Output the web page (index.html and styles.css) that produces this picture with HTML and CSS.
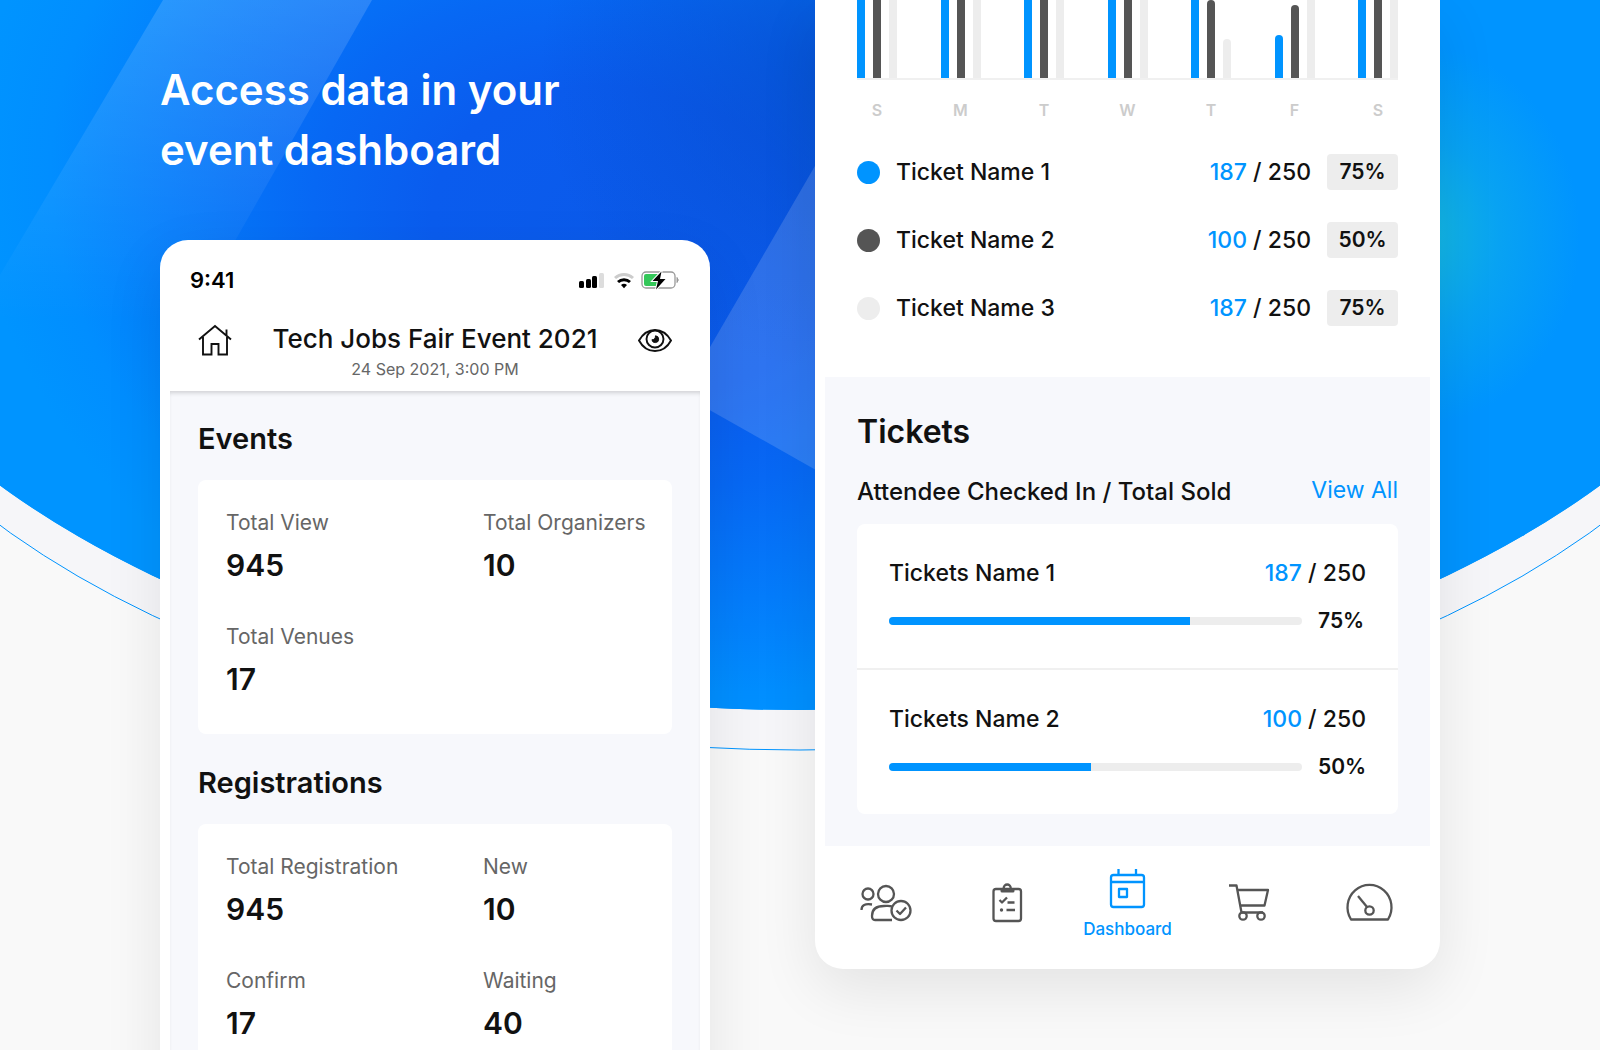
FILE: index.html
```html
<!DOCTYPE html>
<html lang="en">
<head>
<meta charset="utf-8">
<meta name="viewport" content="width=device-width, initial-scale=1">
<title>Access data in your event dashboard</title>
<link rel="stylesheet" href="styles.css">
</head>
<body>
<main class="stage">
  <svg class="backdrop" viewBox="0 0 1600 1050" preserveAspectRatio="xMidYMin slice" aria-hidden="true">
    <defs>
      <radialGradient id="deep" gradientUnits="userSpaceOnUse" cx="0" cy="0" r="1" gradientTransform="translate(630 240) rotate(16) scale(670 500)">
        <stop offset="0" stop-color="#0b5aea"/>
        <stop offset=".3" stop-color="#0a5cee"/>
        <stop offset=".48" stop-color="#0768f4"/>
        <stop offset=".7" stop-color="#047cfb"/>
        <stop offset=".88" stop-color="#018eff"/>
        <stop offset="1" stop-color="#0094ff"/>
      </radialGradient>
      <radialGradient id="night" gradientUnits="userSpaceOnUse" cx="840" cy="70" r="300">
        <stop offset="0" stop-color="#0647c4" stop-opacity=".65"/>
        <stop offset="1" stop-color="#0647c4" stop-opacity="0"/>
      </radialGradient>
      <radialGradient id="teal" gradientUnits="userSpaceOnUse" cx="0" cy="0" r="1" gradientTransform="translate(1420 235) scale(160 190)">
        <stop offset="0" stop-color="#14b8e0"/>
        <stop offset=".5" stop-color="#14b8e0" stop-opacity=".4"/>
        <stop offset="1" stop-color="#14b8e0" stop-opacity="0"/>
      </radialGradient>
      <linearGradient id="ray" gradientUnits="userSpaceOnUse" x1="200" y1="0" x2="200" y2="320">
        <stop offset="0" stop-color="#fff" stop-opacity=".15"/>
        <stop offset="1" stop-color="#fff" stop-opacity="0"/>
      </linearGradient>
    </defs>
    <ellipse cx="800" cy="157" rx="1021" ry="593" fill="#f6f6f9" stroke="#0094ff"/>
    <ellipse cx="800" cy="117" rx="1021" ry="593" fill="#0094ff"/>
    <ellipse cx="800" cy="117" rx="1021" ry="593" fill="url(#deep)"/>
    <ellipse cx="800" cy="117" rx="1021" ry="593" fill="url(#night)"/>
    <ellipse cx="800" cy="117" rx="1021" ry="593" fill="url(#teal)"/>
    <path d="M163 0H372L190 320H0V275Z" fill="url(#ray)"/>
    <path d="M706 354L830 140V478L706 408Z" fill="#fff" fill-opacity=".15"/>
  </svg>

  <section class="intro">
    <h1 class="headline">Access data in your<br>event dashboard</h1>

    <div class="phone phone-left">
      <div class="status">
        <span>9:41</span>
        <svg class="status-icons" viewBox="0 0 102 20" aria-label="Signal, Wi-Fi, battery charging">
          <rect x="1" y="11" width="5" height="7" rx="1.5"/>
          <rect x="8" y="9" width="5" height="9" rx="1.5"/>
          <rect x="14" y="6" width="5" height="12" rx="1.5"/>
          <rect x="21" y="3" width="5" height="15" rx="1.5" fill="#ddd"/>
          <g fill="none" stroke-width="3">
            <path d="M37 8a13.500 13.500 0 0 1 18 0" stroke="#ccc"/>
            <path d="M40 12a9 9 0 0 1 12 0" stroke="#000"/>
          </g>
          <path d="M43 15a4.500 4.500 0 0 1 6 0l-3 3.200Z"/>
          <rect x="64" y="2" width="33" height="16" rx="4" fill="none" stroke="#999" stroke-width="1.300"/>
          <rect x="66" y="4" width="15" height="12" rx="2" fill="#34c759"/>
          <path d="M99 7.500q2.500 2.500 0 5Z" fill="#999" stroke="#999"/>
          <path d="M83.500 1.500L74.500 11h5.500l-2 8.500 9.500-10.500H82Z" stroke="#fff" stroke-width="2" paint-order="stroke"/>
        </svg>
      </div>
      <header class="event-bar">
        <button class="icon-button" type="button" aria-label="Home">
          <svg viewBox="0 0 34 34"><path d="M1 16.500L17 3l16 13.500M5 14v17.500h8.500V21h7v10.500H29V14M28.500 12.500V6.500"/></svg>
        </button>
        <div class="event-title">
          <p class="event-name">Tech Jobs Fair Event 2021</p>
          <p class="event-date">24 Sep 2021, 3:00 PM</p>
        </div>
        <button class="icon-button" type="button" aria-label="Preview">
          <svg viewBox="0 0 34 34"><path d="M1 17.500C4.500 11.500 10 7 17 7s12.500 4.500 16 10.500C29.500 24 24 28 17 28S4.500 24 1 17.500Z"/><circle cx="17" cy="16" r="8.500"/><path d="M17.500 12.800a3.400 3.400 0 1 1-3.600 4c1.800.2 3.800-1.400 3.600-4Z" fill="#111" stroke-width="1"/></svg>
        </button>
      </header>
      <div class="panel stats-panel">
        <h2 class="section-title">Events</h2>
        <dl class="card stats">
          <div><dt>Total View</dt><dd>945</dd></div>
          <div><dt>Total Organizers</dt><dd>10</dd></div>
          <div><dt>Total Venues</dt><dd>17</dd></div>
        </dl>
        <h2 class="section-title">Registrations</h2>
        <dl class="card stats">
          <div><dt>Total Registration</dt><dd>945</dd></div>
          <div><dt>New</dt><dd>10</dd></div>
          <div><dt>Confirm</dt><dd>17</dd></div>
          <div><dt>Waiting</dt><dd>40</dd></div>
        </dl>
      </div>
    </div>
  </section>

  <section class="phone phone-right">
    <div class="sales">
      <div class="chart">
        <div class="day"><i class="bar blue"></i><i class="bar dark"></i><i class="bar pale"></i></div>
        <div class="day"><i class="bar blue"></i><i class="bar dark"></i><i class="bar pale"></i></div>
        <div class="day"><i class="bar blue"></i><i class="bar dark"></i><i class="bar pale"></i></div>
        <div class="day"><i class="bar blue"></i><i class="bar dark"></i><i class="bar pale"></i></div>
        <div class="day"><i class="bar blue"></i><i class="bar dark capped"></i><i class="bar pale capped" style="height:50%"></i></div>
        <div class="day"><i class="bar blue capped" style="height:55%"></i><i class="bar dark capped" style="height:94%"></i><i class="bar pale"></i></div>
        <div class="day"><i class="bar blue"></i><i class="bar dark"></i><i class="bar pale"></i></div>
      </div>
      <div class="days"><span>S</span><span>M</span><span>T</span><span>W</span><span>T</span><span>F</span><span>S</span></div>
      <ul class="legend">
        <li><i class="dot blue"></i><span class="name">Ticket Name 1</span><span><b class="sold">187</b> / 250</span><span class="pill">75%</span></li>
        <li><i class="dot dark"></i><span class="name">Ticket Name 2</span><span><b class="sold">100</b> / 250</span><span class="pill">50%</span></li>
        <li><i class="dot pale"></i><span class="name">Ticket Name 3</span><span><b class="sold">187</b> / 250</span><span class="pill">75%</span></li>
      </ul>
    </div>

    <div class="panel tickets">
      <h2 class="tickets-title">Tickets</h2>
      <div class="tickets-head">
        <p>Attendee Checked In / Total Sold</p>
        <a href="#all">View All</a>
      </div>
      <ul class="card ticket-list">
        <li>
          <div class="line"><span>Tickets Name 1</span><span><b class="sold">187</b> / 250</span></div>
          <div class="line"><div class="track"><div class="fill" style="width:73%"></div></div><span class="percent">75%</span></div>
        </li>
        <li>
          <div class="line"><span>Tickets Name 2</span><span><b class="sold">100</b> / 250</span></div>
          <div class="line"><div class="track"><div class="fill" style="width:49%"></div></div><span class="percent">50%</span></div>
        </li>
      </ul>
    </div>

    <nav class="tabs">
      <a href="#attendees" aria-label="Attendees">
        <svg viewBox="0 0 52 40"><circle cx="8" cy="9" r="5.500"/><circle cx="26" cy="9" r="8"/><path d="M1.500 25C1.500 20 5 18.500 12 19.500M32 21.500c-2-1-5-.5-8-.5-7 0-12 2-12 10 0 3 1 4 3 4h17"/><circle cx="41" cy="25.500" r="9.500"/><path d="M36.500 25.500l3.500 3.500 6-6.500"/></svg>
      </a>
      <a href="#tasks" aria-label="Tasks">
        <svg viewBox="0 0 52 40"><rect x="12.500" y="4" width="27.500" height="32" rx="2.500"/><path d="M22.700 4v-1a3.500 3.500 0 0 1 7 0v1" /><path d="M19.500 3.500h14V6q0 1.500-1.500 1.500h-11Q19.500 7.500 19.500 6Z" fill="currentColor" stroke="none"/><path d="M18.500 15l2.500 2.500 5-5M26.500 17.500h7M25.500 25h8.500"/><circle cx="20.500" cy="25" r="1.700" fill="currentColor" stroke="none"/></svg>
      </a>
      <a class="current" href="#dashboard">
        <svg viewBox="0 0 52 40"><rect x="9" y="6" width="33" height="32" rx="2.500"/><path d="M9 13h33M16.500 0v6M34 0v6"/><rect x="17" y="20" width="8" height="8"/></svg>
        <span>Dashboard</span>
      </a>
      <a href="#cart" aria-label="Cart">
        <svg viewBox="0 0 52 40"><path d="M6 0.500h7.500l5 27M14 5h31L41.500 20.500H17.500M18.500 27.500H40"/><circle cx="20" cy="31" r="3.700"/><circle cx="38" cy="31" r="3.700"/></svg>
      </a>
      <a href="#stats" aria-label="Statistics">
        <svg viewBox="0 0 52 40"><path d="M7 34.500A22 22.500 0 1 1 44 34.500Z"/><circle cx="25.500" cy="25.500" r="4.200"/><path d="M23 22L14 11"/></svg>
      </a>
    </nav>
  </section>
</main>
</body>
</html>
```
FILE: styles.css
```css
* { box-sizing: border-box; margin: 0; padding: 0; }

body {
  background: #f9f9f9;
  color: #111;
  font-family: Inter, "Liberation Sans", sans-serif;
}

.stage {
  position: relative;
  height: 100vh;
  overflow: hidden;
  padding: 0 10%;
  display: grid;
  grid-template-columns: 550fr 625fr;
  column-gap: 105px;
  align-items: start;
}

.backdrop {
  position: absolute;
  inset: 0;
  width: 100%;
  height: 100%;
}

.intro { position: relative; }

.headline {
  padding: 60px 0;
  color: #fff;
  font-size: 42px;
  font-weight: 600;
  line-height: 60px;
}

.phone {
  position: relative;
  padding: 0 10px;
  background: #fff;
  box-shadow: 0 20px 60px rgba(0, 0, 0, 0.09);
}
.phone-left { border-radius: 28px 28px 0 0; }
.phone-right { border-radius: 0 0 28px 28px; }

.status {
  display: flex;
  justify-content: space-between;
  align-items: center;
  height: 80px;
  padding: 0 20px;
  color: #000;
  font-size: 22px;
  font-weight: 600;
}
.status-icons { width: 102px; height: 20px; }

.event-bar {
  display: flex;
  justify-content: space-between;
  align-items: flex-start;
  padding: 3px 28px 8px;
}
.event-title { text-align: center; }
.event-name { font-size: 26px; font-weight: 500; line-height: 32px; }
.event-date { color: #666; font-size: 16px; line-height: 28px; }

.icon-button { border: 0; background: none; width: 34px; height: 34px; }
.icon-button svg {
  display: block;
  width: 34px;
  height: 34px;
  fill: none;
  stroke: #111;
  stroke-width: 1.9;
}

.panel { background: #f7f8fc; }

.stats-panel {
  padding: 30px 28px;
  box-shadow: inset 0 4px 4px -2px rgba(0, 0, 0, 0.16);
}
.section-title {
  margin-bottom: 23px;
  font-size: 29px;
  font-weight: 600;
  line-height: 36px;
}

.card { background: #fff; border-radius: 8px; }

.stats {
  display: grid;
  grid-template-columns: 257fr 161fr;
  row-gap: 38px;
  margin-bottom: 31px;
  padding: 28px 28px 36px;
}
.stats > div { min-width: 0; }
.stats dt {
  margin-bottom: 8px;
  color: #666;
  font-size: 21px;
  line-height: 30px;
  white-space: nowrap;
}
.stats dd { font-size: 30px; font-weight: 600; line-height: 38px; }

.blue { background: #0094ff; }
.dark { background: #555; }
.pale { background: #ededed; }

.sales { padding: 0 32px 51px; }
.chart {
  display: flex;
  justify-content: space-between;
  align-items: flex-end;
  height: 80px;
  border-bottom: 2px solid #f0f0f0;
}
.day { display: flex; align-items: flex-end; gap: 8px; height: 100%; }
.bar { width: 8px; height: 100%; }
.capped { border-radius: 4px 4px 0 0; }

.days {
  display: flex;
  justify-content: space-between;
  margin: 18px 0 32px;
  color: #ccc;
  font-size: 16px;
  font-weight: 600;
  line-height: 24px;
}
.days span { width: 40px; text-align: center; }

.legend { display: grid; gap: 32px; list-style: none; }
.legend li {
  display: flex;
  align-items: center;
  gap: 16px;
  height: 36px;
  font-size: 23px;
  font-weight: 500;
}
.name { flex: 1; }
.dot { width: 23px; height: 23px; border-radius: 50%; }
.sold { color: #0094ff; font-weight: 500; }
.pill {
  width: 71px;
  background: #ededed;
  border-radius: 4px;
  font-size: 21px;
  font-weight: 600;
  line-height: 36px;
  text-align: center;
}

.tickets { padding: 35px 32px 32px; }
.tickets-title {
  margin-bottom: 24px;
  font-size: 32px;
  font-weight: 600;
  line-height: 40px;
}
.tickets-head {
  display: flex;
  justify-content: space-between;
  align-items: flex-start;
  margin-bottom: 16px;
  font-size: 24px;
  font-weight: 500;
  line-height: 32px;
}
.tickets-head a {
  color: #0094ff;
  font-size: 23px;
  font-weight: 400;
  line-height: 28px;
  text-decoration: none;
}

.ticket-list { list-style: none; }
.ticket-list li {
  display: grid;
  gap: 16px;
  padding: 33px 32px 31px;
  font-size: 23px;
  font-weight: 500;
  line-height: 32px;
}
.ticket-list li + li { border-top: 2px solid #f0f0f0; }
.line {
  display: flex;
  justify-content: space-between;
  align-items: center;
  gap: 16px;
}
.track {
  flex: 1;
  height: 8px;
  overflow: hidden;
  background: #ededed;
  border-radius: 4px;
}
.fill { height: 100%; background: #0094ff; }
.percent { width: 48px; font-size: 21px; font-weight: 600; }

.tabs {
  display: grid;
  grid-template-columns: repeat(5, 1fr);
  align-items: center;
  padding: 23px 0 28px;
}
.tabs a {
  display: grid;
  justify-items: center;
  gap: 8px;
  color: #555;
  font-size: 17px;
  font-weight: 500;
  line-height: 24px;
  text-decoration: none;
}
.tabs .current { color: #0094ff; }
.tabs svg {
  width: 52px;
  height: 40px;
  overflow: visible;
  fill: none;
  stroke: currentColor;
  stroke-width: 2.3;
  stroke-linejoin: round;
}
```
